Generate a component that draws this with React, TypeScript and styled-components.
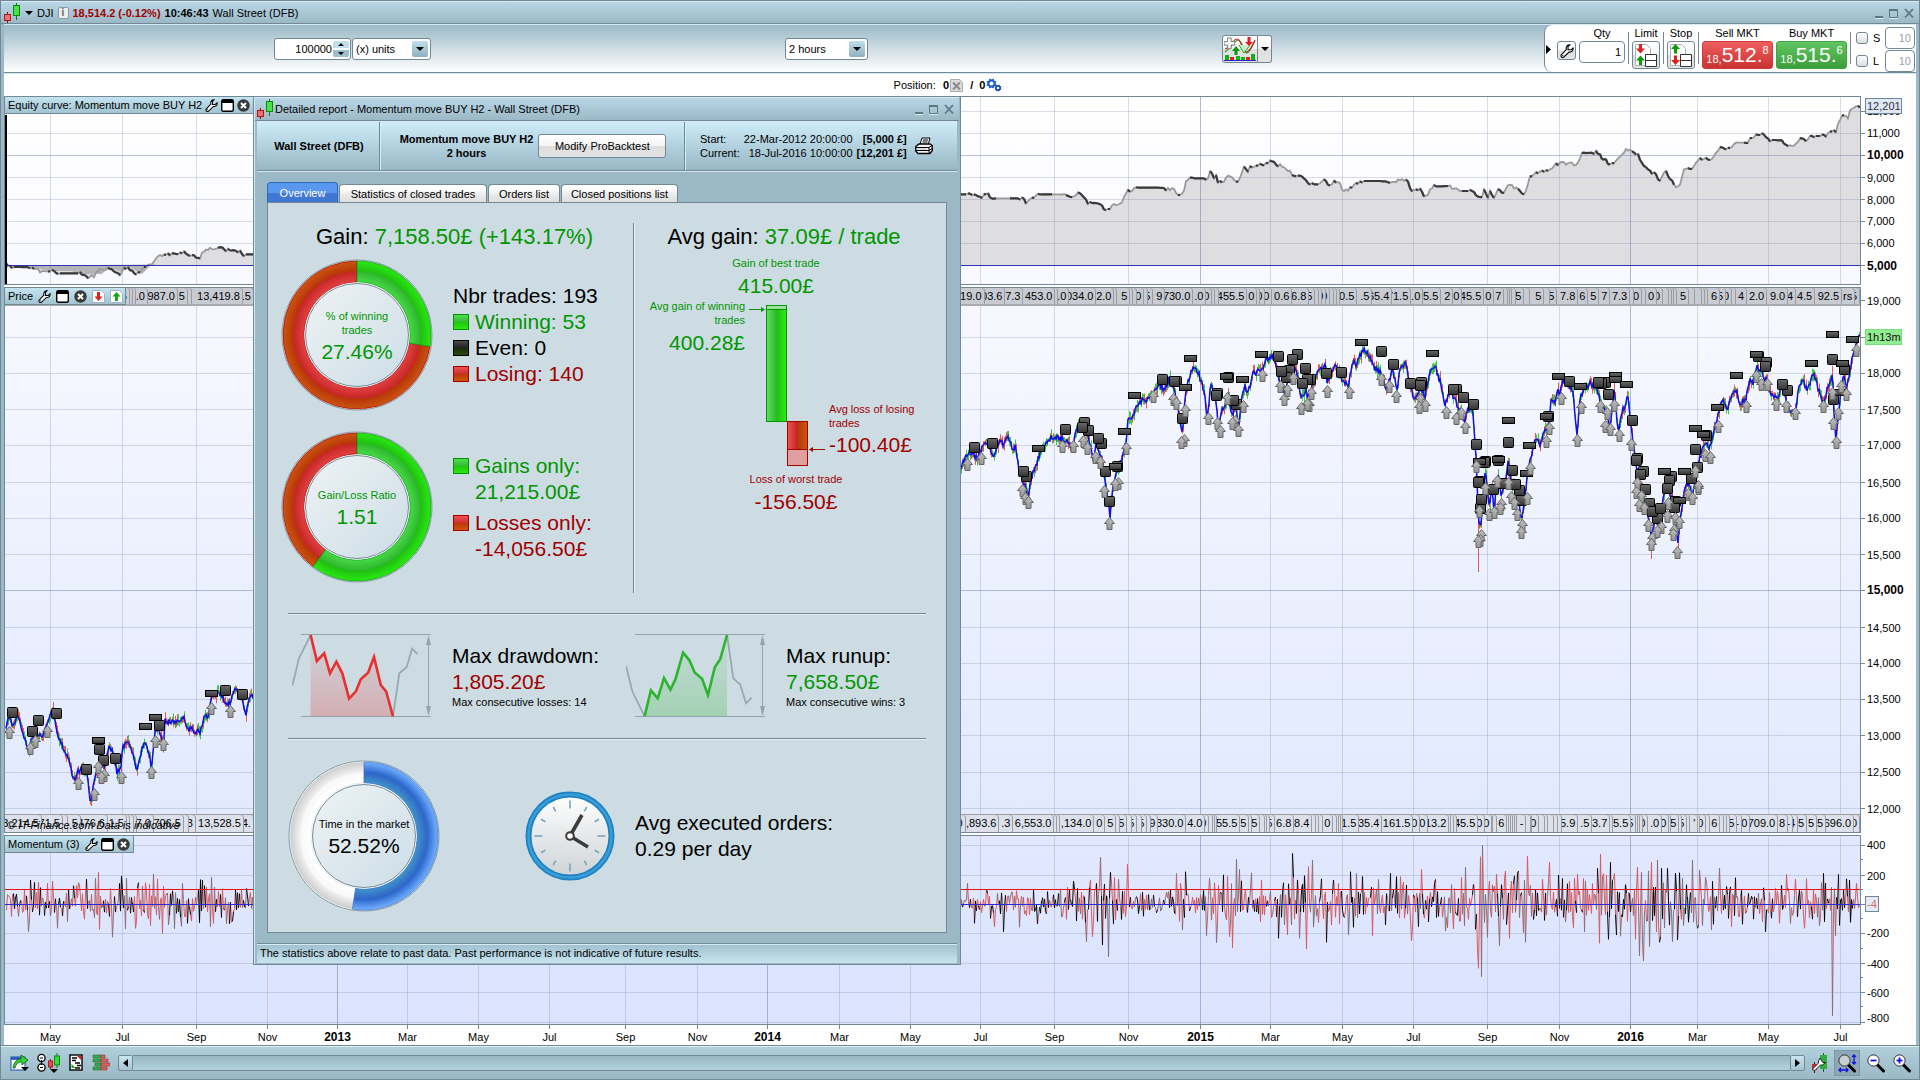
import React from 'react';
import styled, { createGlobalStyle, css } from 'styled-components';

type Pt = [number, number];

const INK = '#728894';
const STEEL = '#9ab8c6';
const GREEN = '#009600';
const RED = '#a00000';

const GlobalStyle = createGlobalStyle`
  *, *::before, *::after { box-sizing: border-box; }
  html, body, #root { height: 100%; }
  body { margin: 0; background: ${STEEL}; color: #000; font: 11px/14px "Liberation Sans", Arial, sans-serif; }
  button, input, select { font: inherit; color: inherit; margin: 0; }
  svg { display: block; flex: none; }
  h1, h2, p { margin: 0; font: inherit; }
`;

/* ---------- data ---------- */

const fromCrop = (pts: Pt[], x0: number, y0: number, sx = 3, sy = 3): Pt[] =>
  pts.map(([x, y]) => [x0 + x / sx, y0 + y / sy]);

const priceTrack: Pt[] = [
  ...fromCrop([[17,215],[28,165],[40,205],[52,165],[65,205],[85,275],[100,220],[112,215],[125,240],[140,190],[152,165],[160,155],[170,220],[180,245],[200,280],[210,310],[220,360],[235,335],[250,320],[262,355],[272,435],[285,350],[300,300],[312,320],[325,265],[335,270],[350,335],[362,325],[367,260],[383,240],[395,275],[410,330],[425,270],[437,240],[445,280],[455,320],[465,215],[475,200],[490,260],[495,185],[530,190],[550,165],[562,215],[575,195],[587,225],[595,205],[600,225],[612,165],[625,170],[635,105],[660,100],[675,130],[690,130],[705,90],[720,105],[738,160],[748,110],[765,105]], 0, 660),
  ...fromCrop([[-10,420],[10,400],[22,370],[35,365],[50,385],[65,360],[80,335],[100,375],[120,325],[128,345],[145,325],[158,355],[165,350],[172,390],[180,440],[195,460],[203,500],[215,440],[228,410],[240,365],[265,325],[310,325],[335,355],[345,310],[357,275],[370,290],[385,320],[400,390],[408,345],[420,375],[428,400],[435,450],[450,560],[458,470],[470,430],[485,385],[500,330],[503,265],[515,270],[528,225],[545,210],[555,215],[575,195],[585,170],[600,165],[610,180],[630,145],[645,185],[655,240],[667,320],[675,200],[690,130],[703,110],[715,125],[722,155],[732,180],[742,265],[752,160],[765,185],[775,290],[785,240],[795,230],[805,180],[815,260],[828,220],[835,290],[845,200],[855,165],[862,190],[880,130],[905,120],[918,85],[930,90],[938,75],[950,110],[962,170],[975,190],[985,150],[1000,110],[1010,120],[1023,210],[1035,180],[1045,200],[1060,160],[1075,125],[1095,110],[1102,160],[1115,120],[1130,105],[1145,150],[1165,170],[1178,95],[1190,110],[1200,75],[1212,60],[1230,80],[1240,110],[1262,125],[1280,180],[1297,115],[1310,180],[1320,120],[1335,95],[1345,140],[1360,205],[1380,180],[1395,200],[1410,120],[1425,105],[1438,150]], 960, 330),
  ...fromCrop([[0,150],[15,225],[30,180],[45,210],[60,240],[75,270],[85,235],[98,235],[108,380],[115,560],[122,600],[135,420],[148,530],[155,460],[162,540],[175,420],[182,500],[195,460],[205,390],[215,470],[230,460],[243,570],[255,500],[265,420],[275,370],[290,320],[300,350],[310,310],[325,290],[333,215],[345,215],[352,180],[360,190],[370,150],[385,160],[400,190],[410,320],[420,210],[430,180],[450,160],[470,170],[485,230],[500,240],[510,300],[522,180],[535,310],[548,230],[556,240],[562,190],[575,300],[585,380],[595,450],[605,480],[615,520],[625,570],[635,620],[645,570],[655,580],[665,540],[675,460],[685,480],[695,500],[705,560],[713,640],[725,540],[735,470],[745,460],[757,500],[770,420],[780,380],[795,340],[810,350],[825,290],[835,250],[845,210],[862,240],[875,190],[888,180],[900,220],[918,205],[930,150],[940,160],[950,105],[965,130],[980,150],[990,190],[1010,210],[1025,170],[1040,220],[1053,250],[1067,245],[1075,165],[1088,150],[1100,180],[1122,130],[1135,180],[1150,215],[1165,165],[1178,130],[1183,280],[1188,330],[1200,200],[1210,140],[1220,180],[1235,90],[1250,30],[1255,10],[1262,15]], 1440, 330),
];

const squares: Pt[] = [
  ...fromCrop([[37,157],[116,181],[97,214],[169,160],[259,328],[298,268],[311,302],[346,295],[478,196],[676,91],[727,103]], 0, 660),
  ...fromCrop([[43,352],[97,340],[200,440],[190,424],[316,298],[373,277],[386,302],[367,292],[425,341],[415,325],[436,424],[473,409],[448,514],[607,148],[650,154],[643,154],[667,265],[773,190],[769,195],[805,143],[830,223],[820,211],[955,79],[1012,73],[997,88],[988,121],[979,143],[964,124],[1036,115],[1051,148],[1042,148],[1027,160],[1099,130],[1144,127],[1264,64],[1300,103],[1351,160],[1385,158],[1381,165]], 960, 330),
  ...fromCrop([[50,178],[40,178],[70,202],[100,223],[109,343],[137,393],[133,398],[175,392],[205,337],[119,453],[115,458],[217,420],[188,460],[238,480],[227,464],[245,510],[160,478],[121,535],[124,508],[388,154],[325,260],[495,158],[484,159],[475,157],[505,193],[577,271],[592,384],[589,390],[610,424],[600,432],[616,477],[628,520],[652,566],[638,544],[662,535],[693,440],[687,450],[682,475],[705,515],[702,532],[754,445],[772,411],[766,358],[798,316],[955,78],[980,97],[976,109],[1042,181],[1027,163],[1177,88],[1213,118],[1180,208]], 1440, 330),
];
const bars: Pt[] = [
  ...fromCrop([[295,241],[466,172],[436,199],[634,100]], 0, 660),
  ...fromCrop([[235,355],[467,409],[493,304],[523,196],[691,85],[676,172],[800,139],[847,148],[904,73],[1204,37],[1417,70]], 960, 330),
  ...fromCrop([[205,271],[268,346],[355,139],[421,169],[526,136],[526,148],[559,163],[259,430],[119,394],[174,388],[320,259],[673,424],[733,424],[718,512],[832,232],[889,136],[949,73],[766,295],[790,313],[1114,100],[1177,13],[1237,28],[1207,100],[1195,187]], 1440, 330),
];
const arrows: Pt[] = [
  ...fromCrop([[28,218],[106,243],[91,265],[142,215],[235,370],[283,404],[295,322],[314,346],[305,353],[365,352],[454,337],[466,243],[490,253],[634,145],[691,154]], 0, 660),
  ...fromCrop([[22,403],[64,385],[187,482],[196,505],[206,517],[307,349],[340,349],[370,334],[382,355],[406,382],[421,397],[433,484],[449,580],[476,461],[467,463],[500,355],[581,200],[640,208],[650,220],[672,331],[664,337],[676,240],[745,266],[772,280],[781,304],[802,205],[826,274],[817,280],[835,301],[850,229],[907,136],[961,169],[973,208],[1000,145],[982,181],[1023,235],[1048,226],[1041,222],[1054,190],[1102,184],[1168,187],[1264,148],[1288,169],[1309,199],[1381,208],[1378,232],[1396,226]], 960, 330),
  ...fromCrop([[19,247],[50,265],[64,250],[76,292],[109,408],[136,475],[119,545],[124,615],[122,630],[115,634],[148,553],[163,548],[173,455],[183,523],[181,535],[205,460],[214,502],[223,520],[232,553],[247,585],[244,607],[262,505],[271,415],[328,295],[319,334],[364,205],[424,232],[412,331],[481,228],[502,250],[496,289],[511,298],[523,226],[538,316],[574,343],[592,460],[588,487],[604,500],[598,526],[613,535],[625,586],[637,625],[634,643],[663,592],[652,604],[682,558],[686,520],[705,565],[702,600],[699,613],[718,577],[713,667],[745,493],[757,505],[766,425],[776,475],[774,468],[796,376],[811,382],[835,289],[919,228],[949,139],[965,163],[982,163],[1009,223],[1040,229],[1067,250],[1150,228],[1177,190],[1180,280],[1195,250],[1188,337],[1204,170],[1219,193],[1248,61]], 1440, 330),
];

const equityTrack: Pt[] = [
  ...fromCrop([[12,790],[25,800],[75,802],[95,813],[130,815],[140,820],[200,820],[212,830],[228,830],[243,805],[256,812],[268,800],[285,822],[298,822],[305,800],[318,806],[332,825],[355,800],[375,797],[382,772],[400,768],[450,757],[460,770],[475,764],[487,775],[500,755],[522,745],[540,742],[560,752],[580,750],[595,763],[622,763]], 0, 0, 2.45),
  ...fromCrop([[780,583],[805,583],[812,578],[820,588],[835,590],[850,582],[863,595],[935,595],[947,608],[960,595],[980,583],[1035,583],[1045,590],[1065,590],[1073,577],[1100,610],[1118,608],[1150,635],[1160,612],[1175,615],[1195,575],[1212,563],[1270,563],[1305,570],[1330,587],[1337,550],[1348,535],[1392,535],[1398,515],[1405,535],[1410,515],[1415,550],[1430,545],[1440,525],[1467,545],[1480,505],[1490,510],[1500,497],[1520,497],[1548,483],[1566,497]], 640, 0, 2.45),
  ...fromCrop([[0,495],[20,515],[50,530],[75,553],[95,553],[110,540],[120,560],[130,545],[148,552],[152,568],[170,568],[185,550],[197,543],[245,543],[270,548],[300,537],[310,540],[320,568],[342,568],[352,587],[362,587],[370,560],[415,558],[435,573],[468,573],[492,598],[500,568],[510,595],[515,570],[525,595],[535,570],[545,578],[560,555],[575,562],[595,583],[603,570],[610,535],[622,518],[635,520],[655,510],[690,485],[725,497],[740,460],[775,457],[808,493],[830,475],[840,455],[862,447],[880,470],[898,505],[915,520],[930,540],[945,512],[970,560],[978,558],[990,510],[1005,510],[1030,475],[1055,480],[1080,440],[1095,450],[1115,428],[1145,428],[1163,405],[1187,405],[1192,420],[1225,420],[1240,435],[1260,437],[1280,413],[1290,425],[1302,408],[1335,408],[1355,385],[1362,393],[1375,345],[1393,350],[1400,325],[1422,320]], 1280, 0, 2.45),
];

const spikes: Pt[] = [
  ...fromCrop([[91,660],[142,670],[295,637],[284,655],[364,648],[460,642],[634,652],[235,668],[415,668],[606,660],[83,815],[170,805],[298,808],[337,832],[485,822],[404,805],[560,790]], 0, 660),
  ...fromCrop([[22,310],[340,303],[407,310],[421,232],[451,277],[463,293],[475,297],[500,253],[649,280],[661,310],[676,275],[748,295],[800,288],[827,238],[838,268],[904,300],[995,220],[1033,287],[1056,240],[1120,300],[1170,275],[1290,280],[1308,290],[1384,268],[42,430],[101,440],[128,455],[176,442],[230,432],[377,485],[395,470],[445,530],[425,495],[460,432],[647,475],[667,450],[739,468],[768,488],[815,503],[806,470],[955,475],[1018,475],[1039,507],[980,465],[1099,487],[1165,465],[1235,468],[1352,482],[1384,488]], 960, 780),
  ...fromCrop([[64,292],[76,262],[127,195],[119,230],[169,283],[196,273],[230,280],[260,229],[305,297],[328,247],[367,295],[412,283],[481,222],[499,285],[522,280],[590,262],[602,277],[634,247],[652,240],[682,265],[705,280],[757,240],[777,270],[836,265],[886,293],[1039,283],[1066,297],[1150,280],[1195,283],[1227,300],[1248,310],[40,447],[72,437],[110,508],[122,590],[115,565],[142,472],[176,497],[206,475],[230,490],[255,487],[410,457],[476,490],[505,478],[527,465],[596,527],[610,543],[628,500],[658,487],[697,485],[711,480],[770,445],[812,450],[905,433],[976,455],[1093,445],[1138,437],[1177,707],[1186,468]], 1440, 780),
];

const months: [number, string][] = [
  [50, 'May'], [122, 'Jul'], [196, 'Sep'], [267, 'Nov'], [337, '2013'], [407, 'Mar'], [478, 'May'], [549, 'Jul'],
  [625, 'Sep'], [697, 'Nov'], [767, '2014'], [839, 'Mar'], [910, 'May'], [980, 'Jul'], [1054, 'Sep'], [1128, 'Nov'],
  [1200, '2015'], [1270, 'Mar'], [1342, 'May'], [1413, 'Jul'], [1487, 'Sep'], [1559, 'Nov'], [1630, '2016'],
  [1697, 'Mar'], [1768, 'May'], [1840, 'Jul'],
];

const range = (n: number) => Array.from({ length: n }, (_, i) => i);
type Level = { y: number; label?: string; major?: boolean };
const equityLevels: Level[] = range(8).map((i) => ({
  y: 111.5 + i * 22, label: `${12 - i},000`, major: i === 2 || i === 7,
}));
const priceLevels: Level[] = range(15).map((i) => {
  const v = 19000 - i * 500;
  return { y: Math.floor(300.8 + i * 36.25) + 0.5, label: i === 1 ? undefined : `${Math.floor(v / 1000)},${v % 1000 ? '500' : '000'}`, major: v === 15000 };
});
const momentumLevels: Level[] = [400, 200, 0, -200, -400, -600, -800].map((v) => ({
  y: Math.round(904 - v * 0.147) + 0.5, label: v === 0 ? undefined : String(v),
}));

/* Tag strips: each entry is the right edge of a tag and the visible end of its text. */
type Tag = [number, string?];
const z2 = (x: number) => 640 + x / 2.45;
const z3 = (x: number) => 1280 + x / 2.45;
const a = (x: number) => 960 + x / 3;
const b = (x: number) => 1440 + x / 3;
const topTags: Tag[] = [
  [125], [130, '5'], [133], [136], [148, '.0'], [178, '987.0'], [188, '5'], [192], [243, '13,419.8'], [254, '.5'],
  [z2(780)], [z2(846), '919.0'], [z2(896), '03.6'], [z2(942), '7.3'], [z2(1018), '453.0'], [z2(1026)], [z2(1054), '.0'], [z2(1120), '034.0'], [z2(1164), '2.0'], [z2(1172)], [z2(1202), '5'], [z2(1210)], [z2(1219)], [z2(1238), '0'], [z2(1247)], [z2(1260), '5'], [z2(1288), '9'], [z2(1358), '730.0'], [z2(1388), '.0'], [z2(1403), '0'], [z2(1412)], [z2(1420)], [z2(1490), '455.5'], [z2(1513), '0'], [z2(1522)], [z2(1534), '0'], [z2(1552), '0'],
  [z3(31), '0.6'], [z3(74), '6.8'], [z3(88), '5'], [z3(97)], [z3(105)], [z3(114), '0'], [z3(126), '0'], [z3(134)], [z3(142)], [z3(150)], [z3(190), '0.5'], [z3(228), '.5'], [z3(276), '65.4'], [z3(324), '71.5'], [z3(354), '.0'], [z3(396), '5.5'], [z3(426), '2'], [z3(449), '0'], [z3(502), '45.5'], [z3(526), '0'], [z3(552), '7'], [z3(560)], [z3(566)], [z3(572)], [z3(580)], [z3(600), '5'], [z3(614)], [z3(650), '5'], [z3(664)], [z3(682), '5'], [z3(732), '7.8'], [z3(758), '6'], [z3(784), '5'], [z3(812), '7'], [z3(860), '7.3'], [z3(870)], [z3(890), '0'], [z3(898)], [z3(926), '0'], [z3(941), '0'], [z3(956)], [z3(962)], [z3(968)], [z3(974)], [z3(1004), '5'], [z3(1020)], [z3(1036)], [z3(1044)], [z3(1052)], [z3(1080), '6'], [z3(1096), '5'], [z3(1111), '0'], [z3(1120)], [z3(1146), '4'], [z3(1196), '2.0'], [z3(1246), '9.0'], [z3(1266), '4'], [z3(1312), '4.5'], [z3(1380), '92.5'], [z3(1410), 'rs'], [1861, '5'],
];
const bottomTags: Tag[] = [
  [42, '3,214.5'], [63, '71.5'], [68], [81, '5'], [108, '476.6'], [127, '1.5'], [130], [134], [137], [154, '7.0'], [184, '706.5'], [189], [196, '3'], [244, '13,528.5'], [254, '4.'],
  [958], [a(18), '0'], [a(121), ',893.6'], [a(163), '.3'], [a(285), '6,553.0'], [a(293)], [a(303)], [a(405), ',134.0'], [a(438), '0'], [a(470), '5'], [a(482)], [a(505), '5'], [a(520)], [a(535), '5'], [a(548)], [a(563), '5'], [a(575)], [a(598), '9'], [a(680), '330.0'], [a(738), '4.0'], [a(750), '0'], [a(763)], [a(769)], [a(775)], [a(843), '55.5'], [a(870), '5'], [a(880)], [a(903), '5'], [a(918)], [a(925)], [a(932)], [a(948), '5'], [a(1006), '6.8'], [a(1060), '8.4'], [a(1070)], [a(1080)], [a(1092)], [a(1123), '0'], [a(1135)], [a(1141)], [a(1147)], [a(1153)], [a(1201), '1.5'], [a(1268), '35.4'], [a(1363), '161.5'], [a(1383), '0'], [a(1408), '0'],
  [b(30), '13.2'], [b(37)], [b(45)], [b(53)], [b(118), '45.5'], [b(138), '0'], [b(158), '0'], [b(163)], [b(175)], [b(205), '6'], [b(211)], [b(217)], [b(223)], [b(229)], [b(235)], [b(260), '-'], [b(275)], [b(280)], [b(300), '0'], [b(318)], [b(326)], [b(345)], [b(358)], [b(370)], [b(416), '5.9'], [b(460), '.5'], [b(512), '3.7'], [b(522)], [b(576), '5.5'], [b(590), '5'], [b(597)], [b(603)], [b(611)], [b(628), '0'], [b(668), '.0'], [b(690), '0'], [b(697)], [b(720), '5'], [b(728)], [b(745), '5'], [b(752)], [b(776), "'"], [b(783)], [b(800), '0'], [b(812)], [b(843), '6'], [b(855)], [b(865)], [b(872)], [b(894), '5'], [b(908), '-'], [b(933), '0'], [b(1016), '709.0'], [b(1048), '8'], [b(1062), '-'], [b(1078), '4'], [b(1104), '5'], [b(1134), '5'], [b(1162), '5'], [b(1246), '696.0'], [1861, '0'],
];

/* ---------- generated chart geometry ---------- */

const makeRandom = (seed: number) => () => {
  seed = (seed * 1664525 + 1013904223) % 4294967296;
  return seed / 4294967296;
};
const lineAt = (track: Pt[], x: number) => {
  let i = 1;
  while (i < track.length - 1 && track[i][0] < x) i += 1;
  const [x0, y0] = track[i - 1];
  const [x1, y1] = track[i];
  return y0 + ((y1 - y0) * (x - x0)) / (x1 - x0 || 1);
};
const toPath = (pts: Pt[]) => pts.map(([x, y], i) => `${i ? 'L' : 'M'}${x.toFixed(1)} ${y.toFixed(1)}`).join('');

const buildPrice = () => {
  const rnd = makeRandom(7);
  const main: Pt[] = [];
  let up = '';
  let down = '';
  for (let x = 6; x < 1861; x += 1) {
    const y = lineAt(priceTrack, x) + (rnd() - 0.5) * 6;
    main.push([x, y]);
    const wick = `M${x + 0.5} ${(y - 1 - rnd() * 6).toFixed(1)}V${(y + 1 + rnd() * 6).toFixed(1)}`;
    if (rnd() > 0.5) up += wick;
    else down += wick;
  }
  return { main: toPath(main), up, down: `${down}M1478.5 520V572M1651.5 540V559M1832.5 366V380` };
};

const envelope: Pt[] = [[5, 14], [100, 16], [150, 18], [253, 14], [960, 10], [1060, 11], [1080, 19], [1110, 24], [1135, 12], [1165, 10], [1180, 22], [1198, 8], [1205, 27], [1250, 18], [1270, 10], [1290, 26], [1350, 18], [1400, 18], [1430, 18], [1470, 18], [1482, 38], [1500, 26], [1560, 18], [1600, 24], [1660, 30], [1700, 22], [1760, 16], [1800, 17], [1861, 20]];
const buildMomentum = () => {
  const rnd = makeRandom(23);
  const pts: Pt[] = [];
  let side = 1;
  for (let x = 6; x < 1860; x += 1) {
    const spike = spikes.find(([sx]) => Math.round(sx) === x);
    if (rnd() > 0.3) side = -side;
    const size = lineAt(envelope, x) * (1.5 * rnd() * rnd() + 0.4 * rnd());
    pts.push([x + 0.5, spike ? spike[1] : 903 + side * size]);
  }
  let dark = '';
  let grey = '';
  let light = '';
  pts.forEach((p, i) => {
    if (!i) return;
    const q = pts[i - 1];
    const seg = `M${q[0]} ${q[1].toFixed(1)}L${p[0]} ${p[1].toFixed(1)}`;
    const pick = rnd();
    const deep = Math.max(p[1], q[1]) > 925;
    if (pick < (deep ? 0.08 : 0.24)) dark += seg;
    else if (pick < 0.4) grey += seg;
    else light += seg;
  });
  return { dark, grey, light };
};

const buildEquity = () => {
  const rnd = makeRandom(5);
  const pts: Pt[] = [];
  for (let x = 6; x <= 1861; x += 2) {
    const y = lineAt(equityTrack, x);
    const flat = Math.abs(lineAt(equityTrack, x + 4) - lineAt(equityTrack, x - 4)) < 1;
    pts.push([x, flat ? y : y + (rnd() - 0.5) * 4]);
  }
  let dark = '';
  pts.forEach((p, i) => {
    if (!i) return;
    const q = pts[i - 1];
    if (p[1] - q[1] > -0.5 && Math.sin(p[0] / 9) > -0.75) dark += toPath([q, p]);
  });
  return { all: toPath(pts), dark, area: `${toPath(pts)}L1861 265.5L6 265.5Z` };
};

const price = buildPrice();
const momentum = buildMomentum();
const equity = buildEquity();

/* ---------- shared pieces ---------- */

const steelBar = css`background: linear-gradient(#bad8e7, ${STEEL});`;
const face = css`
  background: linear-gradient(#fff 0%, #f4f4f4 50%, #dedede 52%, #e4e4e4 100%);
  border: 1px solid ${INK};
  border-radius: 3px;
`;

const Window = styled.div`
  display: flex; flex-direction: column; height: 100%; min-height: 1040px; min-width: 1280px;
  border: 1px solid ${INK}; border-top: 0; background: ${STEEL}; padding: 0 3px; overflow: hidden;
`;
const TitleBar = styled.header`
  ${steelBar}
  flex: none; display: flex; align-items: center; gap: 4px; height: 24px; margin: 0 -3px; padding: 1px 5px 0 3px;
  border-top: 1px solid ${INK}; border-bottom: 1px solid ${INK}; box-shadow: inset 0 1px #d6eaf4;
`;
const Change = styled.strong`color: ${RED};`;
const Info = styled.span`
  display: grid; place-items: center; width: 11px; height: 12px; border: 1px solid #8a9aa4; border-radius: 2px;
  background: #eee; color: #666; font-weight: bold; font-size: 10px; line-height: 10px;
`;
const Sash = styled.div`margin-left: auto; display: flex; gap: 5px;`;
const SashButton = styled.button`border: 0; padding: 0; background: none; color: #5d7684;`;

const Toolbar = styled.div`
  flex: none; display: flex; align-items: center; height: 49px; border-top: 1px solid #d5ecf6; border-bottom: 1px solid ${INK};
  background: linear-gradient(#9bb9c7, #fff);
`;
const Gap = styled.div<{ $grow: number }>`flex: ${(p) => p.$grow} 1 0;`;
const Field = styled.label<{ $width: number }>`
  position: relative; display: flex; align-items: center; width: ${(p) => p.$width}px; height: 22px; margin-right: 1px;
  background: #fff; border: 1px solid ${INK}; border-radius: 3px;
`;
const NumberBox = styled.input`width: 100%; height: 18px; border: 0; padding: 0 18px 0 4px; text-align: right; background: none;`;
const Choice = styled.select`
  appearance: none; width: 100%; height: 18px; border: 0; padding: 0 20px 0 3px; background: none;
`;
const Drop = styled.span`
  position: absolute; right: 2px; top: 2px; width: 16px; height: 16px; display: grid; place-items: center; pointer-events: none;
  border-radius: 2px; background: linear-gradient(#bfdfec, #8fb0be);
`;
const Steps = styled(Drop)`right: 1px; background: linear-gradient(#bfdfec 0 7px, #fff 7px 9px, #9dbfcd 9px);`;
const Split = styled.div`display: flex; height: 28px;`;
const SplitButton = styled.button<{ $width: number; $side: 'left' | 'right' }>`
  ${face}
  display: grid; place-items: center; padding: 0; width: ${(p) => p.$width}px;
  ${(p) => (p.$side === 'left' ? 'border-radius: 3px 0 0 3px;' : 'border-radius: 0 3px 3px 0; border-left: 0;')}
`;

const OrderPanel = styled.div`
  flex: none; display: flex; align-items: flex-start; height: 47px; padding: 1px 1px 0 1px; background: #fff;
  border-left: 1px solid ${INK}; border-radius: 8px 0 0 8px;
`;
const Handle = styled.button`align-self: center; border: 0; background: none; padding: 0; width: 9px;`;
const Column = styled.div<{ $left?: number; $right?: number }>`
  display: flex; flex-direction: column; align-items: center;
  margin: 0 ${(p) => p.$right ?? 3}px 0 ${(p) => p.$left ?? 3}px;
`;
const Caption = styled.label`line-height: 15px; white-space: nowrap;`;
const Qty = styled.input<{ $width: number }>`
  width: ${(p) => p.$width}px; height: 22px; border: 1px solid ${INK}; border-radius: 4px; text-align: right; padding: 0 3px;
  background: #fff;
  &:disabled { color: #9aa4ab; }
`;
const Rule = styled.span`width: 1px; height: 32px; margin-top: 6px; background: ${INK};`;
const Tool = styled.button<{ $w: number; $h: number }>`
  ${face}
  display: grid; place-items: center; padding: 0; width: ${(p) => p.$w}px; height: ${(p) => p.$h}px;
`;
const Deal = styled.button<{ $tone: 'sell' | 'buy' }>`
  display: flex; align-items: flex-end; justify-content: center; width: 71px; height: 28px; padding: 0 0 2px; color: #fff; border-radius: 3px;
  ${(p) => (p.$tone === 'sell'
    ? 'background: linear-gradient(#ef5f5f, #c93232); border: 1px solid #cf3a3a;'
    : 'background: linear-gradient(#62c462, #3a9f3a); border: 1px solid #3fa53f;')}
  big { font-size: 21px; line-height: 23px; }
  sup { font-size: 11px; line-height: 12px; align-self: flex-start; margin-top: 2px; }
  small { font-size: 11px; line-height: 14px; }
`;
const Guards = styled.div`display: flex; flex-direction: column; margin-left: 5px;`;
const Guard = styled.label`
  display: flex; align-items: center; gap: 5px; height: 23px;
  span { width: 7px; }
`;
const Tick = styled.input`
  appearance: none; width: 12px; height: 12px; border: 1px solid ${INK}; border-radius: 3px; background: linear-gradient(#fff, #ddd);
`;

const PositionBar = styled.div`
  flex: none; display: flex; align-items: center; justify-content: center; gap: 1px; height: 23px; padding-right: 24px; background: #fff;
  border-top: 1px solid #d5ecf6; white-space: pre;
`;

const Charts = styled.main`position: relative; flex: 1; min-height: 0; display: flex; flex-direction: column; gap: 2px; background: #fff;`;
const Pane = styled.section<{ $grow: number }>`position: relative; flex: ${(p) => p.$grow} 1 0; min-height: 0; display: flex;`;
const Plot = styled.div<{ $from: string; $to: string }>`
  position: relative; flex: 1; min-width: 0; overflow: hidden; border: 1px solid ${INK};
  background: linear-gradient(${(p) => p.$from}, ${(p) => p.$to});
`;
const PlotSvg = styled.svg`position: absolute; inset: 0; width: 100%; height: 100%;`;
const AxisSvg = styled.svg`
  width: 55px; height: 100%; overflow: visible;
  text { font-size: 11px; dominant-baseline: central; }
  text.major { font-size: 12px; font-weight: bold; }
`;
const TimeAxis = styled.div`flex: none; height: 20px; margin-top: -2px; padding-right: 55px; background: #fff;`;
const TimeSvg = styled.svg`
  width: 100%; height: 20px; overflow: visible;
  text { font-size: 11px; text-anchor: middle; }
  text.major { font-size: 12px; font-weight: bold; }
`;
const PaneTitle = styled.div<{ $width: number; $gap?: number }>`
  position: absolute; left: 0; top: 0; z-index: 1; display: flex; align-items: center; gap: ${(p) => p.$gap ?? 3}px; width: ${(p) => p.$width}px; height: 18px;
  padding: 0 3px; white-space: nowrap; border: 1px solid ${INK}; background: linear-gradient(#c3e4f0, #a3c3d1);
  h2 { margin-right: auto; }
`;
const IconButton = styled.button`border: 0; padding: 0; background: none; display: block;`;
const Strip = styled.div<{ $place: 'top' | 'bottom' }>`
  position: absolute; left: 0; right: 0; height: 18px; display: flex; overflow: hidden;
  ${(p) => (p.$place === 'top' ? 'top: 0; background: #c9cbd3; border-bottom: 2px solid #a9abb1;' : 'bottom: 0; background: #dce0ea; border-top: 1px solid #9b9da3;')}
`;
const TagCell = styled.span<{ $grow: number }>`
  flex: ${(p) => p.$grow} 1 0; min-width: 0; display: flex; justify-content: flex-end; overflow: hidden; line-height: 17px;
  box-shadow: inset -1px 0 #9d9da1; border-top-right-radius: 3px;
  span { flex: none; margin-right: 3px; }
`;
const Copyright = styled.p`position: absolute; left: 2px; bottom: 0; font-style: italic; white-space: nowrap;`;

const StatusBar = styled.footer`
  flex: none; display: flex; align-items: center; height: 34px; margin: 0 -3px; padding: 0 7px 0 9px; border-top: 1px solid ${INK};
  box-shadow: inset 0 1px #e2f2f8; background: linear-gradient(#b1d0dc, ${STEEL});
`;
const Icons = styled.div<{ $gap: number; $before?: number }>`
  display: flex; align-items: center; gap: ${(p) => p.$gap}px; margin-left: ${(p) => p.$before || 0}px;
`;
const ScrollButton = styled.button`
  display: grid; place-items: center; width: 15px; height: 16px; padding: 0; border: 1px solid ${INK}; border-radius: 2px;
  background: linear-gradient(#c8e4ef, #a5c5d3);
`;
const Track = styled.div`flex: 1; height: 16px; border: 1px solid ${INK}; border-width: 1px 0; background: linear-gradient(#98b6c4, #b0d2df);`;
const Pressed = styled.button`
  display: grid; place-items: center; width: 26px; height: 26px; padding: 0; border: 1px solid #7d97a5; background: #8ea7b6;
`;

/* ---------- report window ---------- */

const Report = styled.article`
  position: absolute; left: 249px; top: 0; z-index: 3; width: 708px; border: 1px solid ${INK}; background: ${STEEL}; padding: 0 3px 1px;
  box-shadow: inset 1px 0 #d5ecf6;
`;
const ReportTitle = styled.div`
  ${steelBar}
  display: flex; align-items: center; gap: 1px; height: 24px; margin: 0 -2px; padding: 0 5px 0 2px; border-bottom: 1px solid ${INK};
  box-shadow: inset 0 1px #d6eaf4;
`;
const ReportHead = styled.div`
  display: grid; grid-template-columns: 122px 305px 1fr; height: 50px; border-top: 1px solid #d5ecf6; border-bottom: 1px solid ${INK};
  background: linear-gradient(#cdebf8, #98b7c5); box-shadow: 0 1px #d5ecf6;
`;
const HeadCell = styled.div`
  display: flex; align-items: center; gap: 5px; padding: 0 10px 0 12px; justify-content: center;
  & + & { border-left: 1px solid ${INK}; box-shadow: inset 1px 0 #d5ecf6; }
  & + & + & { justify-content: flex-start; gap: 8px; padding: 0 15px; }
`;
const Bold = styled.strong`text-align: center; white-space: nowrap;`;
const Modify = styled.button`${face} width: 128px; height: 24px; white-space: nowrap; padding: 0;`;
const Dates = styled.dl`
  display: grid; grid-template-columns: auto auto auto; column-gap: 4px; margin: 0; white-space: nowrap;
  dt, dd { margin: 0; }
  dd { text-align: right; }
  dd.amount { font-weight: bold; }
`;
const Tabs = styled.div`display: flex; align-items: flex-end; gap: 1px; margin: 11px 10px 0; height: 20px;`;
const Tab = styled.button<{ $width: number; $active?: boolean }>`
  width: ${(p) => p.$width}px; padding: 0; white-space: nowrap; border: 1px solid ${INK}; border-radius: 4px 4px 0 0; border-bottom: 0;
  ${(p) => (p.$active
    ? 'height: 20px; color: #fff; border-color: #2f66b8; background: linear-gradient(#5a97ee 50%, #3f77d2 52%);'
    : 'height: 18px; background: linear-gradient(#fff 20%, #e9e9e9 60%, #dedede);')}
`;
const Sheet = styled.div`margin: 0 10px; padding: 20px 20px 0; border: 1px solid ${INK}; background: #cddce3;`;
const Upper = styled.div`display: grid; grid-template-columns: 345px 1fr; margin: 0 -20px 20px 0; min-height: 370px;`;
const Heading = styled.h2<{ $inset: number }>`
  font-size: 22px; line-height: 27px; text-align: center; white-space: nowrap; padding-right: ${(p) => p.$inset}px;
`;
const GainSide = styled.div`
  display: flex; flex-direction: column; gap: 20px; margin-left: -7px;
  > h2 { margin: 0 0 -11px; }
`;
const Row = styled.div<{ $gap: number }>`display: flex; align-items: center; gap: ${(p) => p.$gap}px;`;
const Big = styled.p<{ $tone?: string }>`font-size: 21px; line-height: 26px; color: ${(p) => p.$tone || '#000'}; white-space: nowrap;`;
const Small = styled.p<{ $tone?: string }>`color: ${(p) => p.$tone || '#000'};`;
const Tone = styled.span<{ $tone: string }>`color: ${(p) => p.$tone};`;
const Legend = styled.div`display: flex; flex-direction: column;`;
const Entry = styled.div<{ $space?: number }>`display: flex; gap: 6px; margin-top: ${(p) => p.$space || 0}px;`;
const Swatch = styled.i<{ $edge: string; $fill: string }>`
  flex: none; width: 16px; height: 16px; margin-top: 5px; border: 1px solid ${(p) => p.$edge}; background: linear-gradient(${(p) => p.$fill});
`;
const DonutBox = styled.div`display: grid; place-items: center; > * { grid-area: 1 / 1; }`;
const DonutText = styled.div<{ $tone: string }>`
  color: ${(p) => p.$tone}; text-align: center; padding-top: 6px; white-space: pre-line;
  strong { display: block; font-weight: normal; font-size: 21px; line-height: 30px; }
`;
const TradeSide = styled.div`border-left: 1px solid ${INK}; box-shadow: inset 1px 0 #e6f1f6;`;
const Best = styled.div`width: 284px; margin-top: 6px; text-align: center; p + p { margin-top: 3px; }`;
const Worst = styled(Best)`width: 300px; margin: 0 0 0 12px;`;
const TradeBars = styled.div`display: grid; grid-template-columns: 111px 84px 1fr;`;
const WinLabel = styled.div`text-align: right; p:first-child { padding-left: 4px; } p:last-child { margin-top: 3px; }`;
const LossLabel = styled.div`align-self: end; padding-bottom: 14px; p:last-child { margin-top: 2px; } p:first-child { width: 96px; }`;
const Band = styled.section<{ $height: number }>`
  display: flex; align-items: center; min-height: ${(p) => p.$height}px; border-top: 1px solid ${INK}; box-shadow: inset 0 1px #e6f1f6;
`;
const Extreme = styled.div`flex: none; display: flex; align-items: center; gap: 20px; width: 334px; padding-left: 4px;`;
const Extremes = styled.div`display: flex; margin-right: -40px;`;
const ReportFoot = styled.div`
  height: 20px; margin-top: 10px; padding-left: 3px; line-height: 19px; border-top: 1px solid ${INK};
  background: linear-gradient(#a0c0ce, #c6e4f0); box-shadow: inset 0 1px #d5ecf6;
`;

/* ---------- icons ---------- */

const Candles = () => (
  <svg width="17" height="20" viewBox="0 0 17 20" aria-hidden="true">
    <path d="M3.500 9v11" stroke="#8c1010" /><path d="M12.500 0v17" stroke="#0a7a0a" />
    <rect x=".5" y="11.500" width="6" height="6" fill="#f07070" stroke="#b01818" />
    <rect x="9.500" y="2.500" width="6" height="10" fill="#4be04b" stroke="#0a8a0a" />
  </svg>
);
const Caret = ({ size = 8 }: { size?: number }) => (
  <svg width={size} height={size / 2} viewBox="0 0 8 4" aria-hidden="true"><path d="M0 0h8L4 4z" /></svg>
);
const Minimise = () => <svg width="10" height="12" viewBox="0 0 10 12"><path d="M1 10h8" stroke="currentColor" strokeWidth="2" /><path d="M1 11.500h8" stroke="#d5ecf6" /></svg>;
const Maximise = () => <svg width="10" height="12" viewBox="0 0 10 12"><path d="M.500 3v7.500h8V3" fill="none" stroke="currentColor" /><path d="M0 3h9" stroke="currentColor" strokeWidth="2" /><path d="M0 11.500h9" stroke="#d5ecf6" /></svg>;
const Close = () => <svg width="10" height="12" viewBox="0 0 10 12"><path d="M1 2l8 8.500M9 2L1 10.500" stroke="currentColor" strokeWidth="1.800" /></svg>;
const SashButtons = () => (
  <Sash>
    <SashButton aria-label="Minimise"><Minimise /></SashButton>
    <SashButton aria-label="Maximise"><Maximise /></SashButton>
    <SashButton aria-label="Close"><Close /></SashButton>
  </Sash>
);
const Wrench = ({ size = 13 }: { size?: number }) => (
  <svg width={size} height={size} viewBox="0 0 14 14" aria-hidden="true">
    <path d="M9.800.8 8 2.600v3.200h3.200L13 4c.6 2.400-1.300 4.500-4 4L3.600 13.200c-1.500 1-3.300-.8-2.300-2.300L6.300 5.600C5.700 2.800 7.500.4 9.800.8z" fill="#fff" stroke="#000" strokeWidth="1.100" />
    <circle cx="2.800" cy="11.600" r=".6" />
  </svg>
);
const Frame = () => (
  <svg width="13" height="13" viewBox="0 0 13 13" aria-hidden="true">
    <rect x=".7" y=".7" width="11.600" height="11.600" rx="1.500" fill="#fff" stroke="#000" strokeWidth="1.400" /><path d="M1 2.500h11" stroke="#000" strokeWidth="3" />
  </svg>
);
const CloseRound = () => (
  <svg width="13" height="13" viewBox="0 0 13 13" aria-hidden="true">
    <circle cx="6.500" cy="6.500" r="6.200" fill="#3a3a3a" /><path d="M4 4l5 5M9 4L4 9" stroke="#fff" strokeWidth="2" />
  </svg>
);
const ArrowNote = ({ up }: { up?: boolean }) => (
  <svg width="13" height="13" viewBox="0 0 13 13" aria-hidden="true">
    <path d="M.500.500h9l3 3v9H.500z" fill="#fff" stroke="#9fb4c0" />
    <path d={up ? 'M6.500 2L2.500 6.500H5V11h3V6.500h2.500z' : 'M6.500 11L2.500 6.500H5V2h3v4.500h2.500z'} fill={up ? '#10a810' : '#e02020'} />
  </svg>
);
const OrderIcon = ({ stop }: { stop?: boolean }) => (
  <svg width="24" height="24" viewBox="0 0 24 24" aria-hidden="true">
    <path d="M1.500 1.500h11l4 4v17h-15z" fill="#fff" stroke="#a9b3b8" />
    <path d={stop ? 'M6.500 1L2 6H5v4.500h3V6h3z' : 'M6.500 10.500L2 5.500H5V1h3v4.500h3z'} fill={stop ? '#0a9a0a' : '#e02020'} />
    <path d={stop ? 'M6.500 22L2 17H5v-4.500h3V17h3z' : 'M6.500 12.500L2 17.500H5V22h3v-4.500h3z'} fill={stop ? '#e02020' : '#0a9a0a'} />
    <path d="M11.500 11.500h11v12h-11zM11.500 17.500h11" fill="#fff" stroke="#333" />
  </svg>
);
const Indicators = () => (
  <svg width="32" height="24" viewBox="0 0 32 24" aria-hidden="true">
    <path d="M1 15C6 12 10 4 14 3s6 14 9 13 5-6 8-12" fill="none" stroke="#2a2" strokeWidth="1.200" />
    <path d="M1 12C6 11 9 2 13 2s6 13 9 13 5-4 9-12" fill="none" stroke="#c22" strokeWidth="1.200" />
    <path d="M15 8l5 8 6-8" fill="#cdeccd" stroke="#2a2" />
    <path d="M12 9l-4 5h2.500v4h3v-4H16z" fill="#0a9a0a" /><path d="M25 9l-4-4h2.500V0h3v5H29z" fill="#e02020" />
    <path d="M4 1h4v4h4v4H8v4H4V9H0V5h4z" fill="#f4f4f4" stroke="#777" transform="scale(.9)" />
    <path d="M1 18h4v5H1zM12 19h4v4h-4zM17 20h4v3h-4zM27 17h4v6h-4z" fill="#12b012" />
    <path d="M6 20h4v3H6zM22 20h4v3h-4z" fill="#d22" /><path d="M0 23.500h32" stroke="#22c" />
  </svg>
);
const gearPath = (cx: number, cy: number, r: number) =>
  range(16).map((i) => {
    const t = (i * Math.PI) / 8;
    const k = i % 2 ? r : r * 0.72;
    return `${i ? 'L' : 'M'}${(cx + k * Math.cos(t)).toFixed(1)} ${(cy + k * Math.sin(t)).toFixed(1)}`;
  }).join('') + 'Z';
const Gears = () => (
  <svg width="16" height="14" viewBox="0 0 16 14" aria-hidden="true">
    <path d={gearPath(5.500, 5.500, 5.500)} fill="#1d5fd0" /><circle cx="5.500" cy="5.500" r="2" fill="#fff" />
    <path d={gearPath(12, 10, 3.800)} fill="#1248b0" /><circle cx="12" cy="10" r="1.300" fill="#fff" />
  </svg>
);
const CancelNote = () => (
  <svg width="13" height="13" viewBox="0 0 13 13" aria-hidden="true">
    <path d="M.500.500h9l3 3v9H.500z" fill="#ddd" stroke="#aaa" /><path d="M3 3.500l7 7M10 3.500l-7 7" stroke="#8c8c8c" strokeWidth="2.200" />
  </svg>
);
const Printer = () => (
  <svg width="18" height="18" viewBox="0 0 18 18" aria-hidden="true">
    <path d="M5 7l2-6h8l-2 7z" fill="#fff" stroke="#000" /><path d="M8 3h5M7.500 5h5" stroke="#000" />
    <path d="M.700 9.500L4 7h11l2.300 1.500v5L15 16.500H3L.700 14z" fill="#f2f2f2" stroke="#000" strokeWidth="1.300" />
    <path d="M1 10.500h13l3-2M1 13.500h13l3-2M14 10.500V16" stroke="#000" fill="none" />
    <path d="M2 12h9" stroke="#bbb" />
  </svg>
);
const ExportChart = () => (
  <svg width="19" height="18" viewBox="0 0 19 18" aria-hidden="true">
    <rect x="1" y="3" width="14" height="13" fill="#fff" stroke="#1c4fae" /><path d="M1 4.500h14" stroke="#1c4fae" strokeWidth="2.500" />
    <path d="M3 14C4 8 7 5 11 5V1l7 5-6 5V8C8 8 6 10 5 14z" fill="#3fce3f" stroke="#0a7a0a" /><path d="M11 13h8l-4 4z" />
  </svg>
);
const LinkCandles = () => (
  <svg width="24" height="20" viewBox="0 0 24 20" aria-hidden="true">
    <circle cx="4.500" cy="5" r="3.600" fill="#fff" stroke="#000" strokeWidth="1.300" /><circle cx="4.500" cy="14.500" r="3.600" fill="#fff" stroke="#000" strokeWidth="1.300" />
    <path d="M3 5h3M3 14.500h3M4.500 7v5" stroke="#000" /><path d="M13.500 6v10" stroke="#8c1010" /><path d="M20 0v15" stroke="#0a7a0a" />
    <rect x="11.500" y="8" width="4" height="6" fill="#e85050" stroke="#b01818" /><rect x="17.500" y="3" width="5" height="9" fill="#3ed63e" stroke="#0a8a0a" /><path d="M13 16h8l-4 4z" />
  </svg>
);
const News = () => (
  <svg width="15" height="17" viewBox="0 0 15 17" aria-hidden="true">
    <rect x="1" y="1" width="12" height="15" fill="#fff" stroke="#000" strokeWidth="1.400" /><path d="M3 4h5M3 6.500h4M6 9h5M8 11.500h4M6 14h5" stroke="#000" strokeWidth="1.300" />
    <path d="M8 2h4v4z" fill="#e02020" /><path d="M2.500 10v4h4z" fill="#10a810" />
  </svg>
);
const Book = () => (
  <svg width="18" height="18" viewBox="0 0 18 18" aria-hidden="true">
    <path d="M1 1h8v3H1zM1 5h8v3H1zM3 9h6v3H3zM1 13h8v3H1z" fill="#2cae4c" stroke="#3a6a3a" strokeWidth=".6" />
    <path d="M9 1h4v3H9zM9 5h7v3H9zM9 9h9v3H9zM9 13h6v3H9z" fill="#e06060" stroke="#8a3030" strokeWidth=".6" />
  </svg>
);
const SettingsCandles = () => (
  <svg width="17" height="20" viewBox="0 0 17 20" aria-hidden="true">
    <path d="M3.500 9v11" stroke="#5a1010" /><path d="M12.500 0v19" stroke="#063" />
    <rect x="1" y="11" width="5" height="6" fill="#c03030" /><rect x="9" y="2" width="7" height="14" fill="#2fae3f" />
    <path d="M9 5L7.500 8v2L2 15.500c-.5 1.500.8 2.500 2 1.800L9.500 12h2l3-2.500-2.500.2-1.500-2z" fill="#fff" stroke="#000" strokeWidth=".8" />
  </svg>
);
const Lens = ({ sign }: { sign: 'plus' | 'minus' | 'fit' }) => (
  <svg width="20" height="20" viewBox="0 0 20 20" aria-hidden="true">
    <path d="M11.500 12l6 6" stroke="#000" strokeWidth="3" strokeLinecap="round" />
    <circle cx="7.500" cy="7.500" r="5.600" fill={sign === 'fit' ? '#c9cfd3' : '#fff'} stroke="#333" />
    {sign !== 'fit' && <path d="M4.500 7.500h6" stroke="#1010e0" strokeWidth="1.800" />}
    {sign === 'plus' && <path d="M7.500 4.500v6" stroke="#1010e0" strokeWidth="1.800" />}
    {sign === 'fit' && <path d="M17 2v9M15 4l2-2 2 2M15 9l2 2 2-2M2 17h9M4 15l-2 2 2 2M9 15l2 2-2 2" fill="none" stroke="#1010e0" strokeWidth="1.300" />}
  </svg>
);

/* ---------- charts ---------- */

const GridLines = ({ levels, top, bottom }: { levels: Level[]; top: number; bottom: number }) => (
  <g stroke="#7884aa">
    {levels.map((l) => <path key={l.y} d={`M5 ${l.y}H1861`} opacity={l.major ? 0.5 : 0.27} />)}
    {months.map(([x, m]) => <path key={x} d={`M${x + 0.5} ${top}V${bottom}`} opacity={/\d/.test(m) ? 0.55 : 0.27} />)}
  </g>
);

type AxisProps = { levels: Level[]; top: number; bottom: number; ticks?: number[]; badge: { y: number; text: string; tone: 'blue' | 'green' | 'red' } };
const tones = { blue: ['#dfe6f8', INK, '#333'], green: ['#90ee90', '#7bdc7b', '#111'], red: ['#e4eaf8', INK, '#e06a5a'] };
const Axis = ({ levels, top, bottom, ticks = [], badge }: AxisProps) => {
  const pct = (y: number) => `${(((y - top) / (bottom - top)) * 100).toFixed(3)}%`;
  const [fill, edge, ink] = tones[badge.tone];
  return (
    <AxisSvg>
      {levels.map((l) => (
        <g key={l.y}>
          <line x1="0" x2="4" y1={pct(l.y)} y2={pct(l.y)} stroke={INK} />
          {l.label && <text x="6" y={pct(Math.min(l.y, bottom - 7))} className={l.major ? 'major' : undefined}>{l.label}</text>}
        </g>
      ))}
      {ticks.map((y) => <line key={y} x1="0" x2="2" y1={pct(y)} y2={pct(y)} stroke={INK} />)}
      <rect x="4.500" y={pct(badge.y - 7.500)} width={badge.tone === 'red' ? 13 : 36} height="15" fill={fill} stroke={edge} />
      <text x="6" y={pct(badge.y)} fill={ink}>{badge.text}</text>
    </AxisSvg>
  );
};

const TagStrip = ({ tags, place }: { tags: Tag[]; place: 'top' | 'bottom' }) => (
  <Strip $place={place}>
    {tags.map(([end, text], i) => (
      <TagCell key={i} $grow={Math.round(end) - (i ? Math.round(tags[i - 1][0]) : 5)}>{text && <span>{text}</span>}</TagCell>
    ))}
  </Strip>
);

const TitleIcons = () => (
  <>
    <IconButton aria-label="Settings"><Wrench /></IconButton>
    <IconButton aria-label="Restore"><Frame /></IconButton>
    <IconButton aria-label="Close"><CloseRound /></IconButton>
  </>
);

const EquityPane = () => (
  <Pane $grow={189}>
    <PaneTitle $width={250}><h2>Equity curve: Momentum move BUY H2</h2><TitleIcons /></PaneTitle>
    <Plot $from="#ffffff" $to="#f8f9ff">
      <PlotSvg viewBox="5 97 1855 187" preserveAspectRatio="none">
        <path d={equity.area} fill="#dedee1" />
        <path d="M30 265.500V267l20 4h22l4 3h26l6-7 14 5 6-6 14 8 9-9h5v-.5z" fill="#b4b4b8" />
        <GridLines levels={equityLevels} top={97} bottom={285} />
        <path d={equity.all} fill="none" stroke="#9a9a9a" strokeWidth="1.800" />
        <path d={equity.dark} fill="none" stroke="#3a3a3a" strokeWidth="2.200" />
        <path d="M5 265.500H1861" stroke="#3030b8" />
        <path d="M6 115V285" stroke="#000" strokeWidth="2" />
      </PlotSvg>
    </Plot>
    <Axis levels={equityLevels} top={96} bottom={285} badge={{ y: 106, text: '12,201', tone: 'blue' }} />
  </Pane>
);

const snap = (v: number) => Math.round(v - 0.5) + 0.5;
const PricePane = () => (
  <Pane $grow={546}>
    <PaneTitle $width={122} $gap={5}>
      <h2>Price</h2><TitleIcons />
      <IconButton aria-label="Show sells"><ArrowNote /></IconButton>
      <IconButton aria-label="Show buys"><ArrowNote up /></IconButton>
    </PaneTitle>
    <Plot $from="#f8f9ff" $to="#e1e9fe">
      <PlotSvg viewBox="5 288 1855 544" preserveAspectRatio="none">
        <defs>
          <linearGradient id="block" x2="0" y2="1"><stop stopColor="#6a6a6a" /><stop offset="1" stopColor="#343434" /></linearGradient>
          <linearGradient id="arrow" x2="0" y2="1"><stop stopColor="#c0c0c0" /><stop offset="1" stopColor="#949494" /></linearGradient>
        </defs>
        <GridLines levels={priceLevels} top={288} bottom={832} />
        <path d={price.up} stroke="#3fc84a" fill="none" />
        <path d={price.down} stroke="#e05a5a" fill="none" />
        <path d={price.main} stroke="#1010e6" strokeWidth="1.500" fill="none" />
        {squares.map(([x, y], i) => <rect key={i} x={snap(x) - 5} y={snap(y) - 5} width="10" height="10" rx="1" fill="url(#block)" stroke="#000" />)}
        {bars.map(([x, y], i) => <rect key={i} x={snap(x) - 6} y={snap(y) - 3} width="12" height="6" fill="url(#block)" stroke="#000" />)}
        {arrows.map(([x, y], i) => (
          <path key={i} d={`M${snap(x)} ${snap(y) - 6}l5 6h-2.500v6h-5v-6h-2.500z`} fill="url(#arrow)" stroke="#686868" />
        ))}
      </PlotSvg>
      <TagStrip tags={topTags} place="top" />
      <TagStrip tags={bottomTags} place="bottom" />
      <Copyright>© IT-Finance.com Data is indicative</Copyright>
    </Plot>
    <Axis levels={priceLevels} top={287} bottom={833} badge={{ y: 337, text: '1h13m', tone: 'green' }} />
  </Pane>
);

const MomentumPane = () => (
  <Pane $grow={190}>
    <PaneTitle $width={130}><h2>Momentum (3)</h2><TitleIcons /></PaneTitle>
    <Plot $from="#e1e8ff" $to="#dbe4fe">
      <PlotSvg viewBox="5 836 1855 188" preserveAspectRatio="none">
        <GridLines levels={momentumLevels} top={836} bottom={1024} />
        <path d={momentum.light} fill="none" stroke="#d45c60" />
        <path d={momentum.grey} fill="none" stroke="#807078" />
        <path d={momentum.dark} fill="none" stroke="#000" />
        <path d="M5 889.500H1861" stroke="#e81010" />
        <path d="M5 904.500H1861" stroke="#2a2ad8" />
      </PlotSvg>
    </Plot>
    <Axis levels={momentumLevels} top={835} bottom={1025} ticks={[859.500, 889.500, 918.500, 948.500, 977.500, 1006.500]} badge={{ y: 904, text: '-4', tone: 'red' }} />
  </Pane>
);

/* ---------- report drawings ---------- */

const polar = (r: number, share: number): Pt => {
  const t = share * 2 * Math.PI;
  return [76 + r * Math.sin(t), 76 - r * Math.cos(t)];
};
const ringSlice = (from: number, to: number) => {
  const [ax, ay] = polar(74, from);
  const [bx, by] = polar(74, to);
  const [cx, cy] = polar(53, to);
  const [dx, dy] = polar(53, from);
  const big = to - from > 0.5 ? 1 : 0;
  return `M${ax} ${ay}A74 74 0 ${big} 1 ${bx} ${by}L${cx} ${cy}A53 53 0 ${big} 0 ${dx} ${dy}Z`;
};
const ringTones: Record<string, [string, string, string, string, string]> = {
  green: ['#46d846', '#2fb82f', '#20c010', '#28ea12', '#009a00'],
  red: ['#e04040', '#c62626', '#b83608', '#ca5512', '#b00000'],
  blue: ['#3f92c8', '#2f66c8', '#2f6cd0', '#74b0ff', '#3a74cc'],
  white: ['#ffffff', '#f8f8f8', '#f0f0f0', '#cccccc', '#dddddd'],
};
const Donut = ({ id, share, tones: [first, second], tone, label, value }: { id: string; share: number; tones: [string, string]; tone: string; label: string; value: string }) => (
  <DonutBox>
    <svg width="152" height="152" viewBox="0 0 152 152" aria-hidden="true">
      <defs>
        {[first, second].map((name) => {
          const c = ringTones[name];
          return (
            <radialGradient key={name} id={`${id}-${name}`} gradientUnits="userSpaceOnUse" cx="76" cy="76" r="74">
              <stop offset=".72" stopColor={c[0]} /><stop offset=".855" stopColor={c[1]} /><stop offset=".865" stopColor={c[2]} /><stop offset="1" stopColor={c[3]} />
            </radialGradient>
          );
        })}
        <linearGradient id={`${id}-core`} x2="1" y2="1"><stop stopColor="#eef3f5" /><stop offset="1" stopColor="#ccdde6" /></linearGradient>
      </defs>
      <circle cx="76" cy="76" r="75" fill="#fff" stroke="#8298a6" />
      <path d={ringSlice(share, 1)} fill={`url(#${id}-${second})`} stroke={ringTones[second][4]} strokeWidth=".7" />
      <path d={ringSlice(0, share)} fill={`url(#${id}-${first})`} stroke={ringTones[first][4]} strokeWidth=".7" />
      <circle cx="76" cy="76" r="52.500" fill="#fff" />
      <circle cx="76" cy="76" r="51.500" fill={`url(#${id}-core)`} stroke="#748c9a" />
    </svg>
    <DonutText $tone={tone}>{label}<strong>{value}</strong></DonutText>
  </DonutBox>
);

const greenFill = '#4fdd4f, #35bb35 48%, #1fc80f 52%, #2ce614';
const redFill = '#f25050, #cc3030 48%, #bb3a08 52%, #cb5512';
const blackFill = '#4c4c4c, #222 48%, #1c2a0c 52%, #2c4a0c';

const spark = (pts: Pt[], x0: number): Pt[] => pts.map(([x, y]) => [(x - x0) / 2.208, (y - 104) / 3]);
const Swing = ({ tone, x0, core, before, after, id }: { tone: string; x0: number; core: Pt[]; before: Pt[]; after: Pt[]; id: string }) => {
  const pts = spark(core, x0);
  return (
    <svg width="140" height="84" viewBox="0 0 140 84" aria-hidden="true">
      <defs><linearGradient id={id} x2="0" y2="1"><stop stopColor={tone} stopOpacity=".04" /><stop offset="1" stopColor={tone} stopOpacity=".27" /></linearGradient></defs>
      <path d={`${toPath(pts)}V83H${pts[0][0]}Z`} fill={`url(#${id})`} />
      <path d="M9 .5H139M9 82.500H139M136.500 3V80" stroke="#94a4ac" fill="none" />
      <path d="M136.500 1l2.500 10h-5zM136.500 82l2.500-10h-5z" fill="#94a4ac" />
      <path d={toPath(spark(before, x0)) + toPath(spark(after, x0))} fill="none" stroke="#98a9b2" strokeWidth="1.800" />
      <path d={toPath(pts)} fill="none" stroke={tone} strokeWidth="2.600" />
    </svg>
  );
};

const Clock = () => (
  <svg width="90" height="90" viewBox="0 0 90 90" aria-hidden="true">
    <defs>
      <linearGradient id="dial" x2="0" y2="1"><stop stopColor="#fff" /><stop offset="1" stopColor="#cdd3d6" /></linearGradient>
    </defs>
    <circle cx="45" cy="45" r="41.500" fill="url(#dial)" stroke="#1c84c4" strokeWidth="6" />
    <circle cx="45" cy="45" r="41.500" fill="none" stroke="#3c9cd6" strokeWidth="2.500" />
    {range(12).map((i) => (
      <path key={i} d={i % 3 ? 'M45 11.500v5' : 'M45 9.500v8'} stroke="#7aa6bc" strokeWidth="1.600" transform={`rotate(${i * 30} 45 45)`} />
    ))}
    <path d="M45 45L57 24M45 45L63 56" stroke="#3c3c3c" strokeWidth="3.600" />
    <circle cx="45" cy="45" r="3.800" fill="#fff" stroke="#3c3c3c" strokeWidth="2" />
  </svg>
);

const TradeChart = () => (
  <svg width="84" height="173" viewBox="0 0 84 173" aria-hidden="true">
    <defs>
      <linearGradient id="win"><stop stopColor="#5fe05f" /><stop offset=".48" stopColor="#30b830" /><stop offset=".52" stopColor="#1fc010" /><stop offset="1" stopColor="#30e818" /></linearGradient>
      <linearGradient id="lose"><stop stopColor="#f45050" /><stop offset=".45" stopColor="#c42a2a" /><stop offset=".5" stopColor="#b83408" /><stop offset="1" stopColor="#cc5a14" /></linearGradient>
    </defs>
    <rect x="21.500" y="6.500" width="20" height="5" fill="#9be09b" stroke={GREEN} />
    <rect x="21.500" y="10.500" width="20" height="112" fill="url(#win)" stroke={GREEN} />
    <rect x="42.500" y="122.500" width="20" height="28" fill="url(#lose)" stroke={RED} />
    <rect x="42.500" y="150.500" width="20" height="16" fill="#e0a0a0" stroke={RED} />
    <path d="M4 10.500h12" stroke={GREEN} /><path d="M20 10.500l-4-2.500v5z" fill={GREEN} />
    <path d="M80 150.500H68" stroke={RED} /><path d="M64 150.500l4-2.500v5z" fill={RED} />
  </svg>
);

const ReportWindow = () => (
  <Report>
    <ReportTitle><Candles /><h2>Detailed report - Momentum move BUY H2 - Wall Street (DFB)</h2><SashButtons /></ReportTitle>
    <ReportHead>
      <HeadCell><Bold>Wall Street (DFB)</Bold></HeadCell>
      <HeadCell><Bold>Momentum move BUY H2<br />2 hours</Bold><Modify>Modify ProBacktest</Modify></HeadCell>
      <HeadCell>
        <Dates>
          <dt>Start:</dt><dd>22-Mar-2012 20:00:00</dd><dd className="amount">[5,000 £]</dd>
          <dt>Current:</dt><dd>18-Jul-2016 10:00:00</dd><dd className="amount">[12,201 £]</dd>
        </Dates>
        <IconButton aria-label="Print"><Printer /></IconButton>
      </HeadCell>
    </ReportHead>
    <Tabs role="tablist">
      <Tab role="tab" aria-selected $width={71} $active>Overview</Tab>
      <Tab role="tab" $width={148}>Statistics of closed trades</Tab>
      <Tab role="tab" $width={72}>Orders list</Tab>
      <Tab role="tab" $width={117}>Closed positions list</Tab>
    </Tabs>
    <Sheet>
      <Upper>
        <GainSide>
          <Heading $inset={5}>Gain: <Tone $tone={GREEN}>7,158.50£ (+143.17%)</Tone></Heading>
          <Row $gap={20}>
            <Donut id="win-rate" share={0.2746} tones={['green', 'red']} tone={GREEN} label={'% of winning\ntrades'} value="27.46%" />
            <Legend>
              <Big>Nbr trades: 193</Big>
              <Entry><Swatch $edge={GREEN} $fill={greenFill} /><Big $tone={GREEN}>Winning: 53</Big></Entry>
              <Entry><Swatch $edge="#000" $fill={blackFill} /><Big>Even: 0</Big></Entry>
              <Entry><Swatch $edge={RED} $fill={redFill} /><Big $tone={RED}>Losing: 140</Big></Entry>
            </Legend>
          </Row>
          <Row $gap={20}>
            <Donut id="ratio" share={0.601} tones={['green', 'red']} tone={GREEN} label="Gain/Loss Ratio" value="1.51" />
            <Legend>
              <Entry><Swatch $edge={GREEN} $fill={greenFill} /><Big $tone={GREEN}>Gains only:<br />21,215.00£</Big></Entry>
              <Entry $space={5}><Swatch $edge={RED} $fill={redFill} /><Big $tone={RED}>Losses only:<br />-14,056.50£</Big></Entry>
            </Legend>
          </Row>
        </GainSide>
        <TradeSide>
          <Heading $inset={12}>Avg gain: <Tone $tone={GREEN}>37.09£ / trade</Tone></Heading>
          <Best><Small $tone={GREEN}>Gain of best trade</Small><Big $tone={GREEN}>415.00£</Big></Best>
          <TradeBars>
            <WinLabel><Small $tone={GREEN}>Avg gain of winning trades</Small><Big $tone={GREEN}>400.28£</Big></WinLabel>
            <TradeChart />
            <LossLabel><Small $tone={RED}>Avg loss of losing trades</Small><Big $tone={RED}>-100.40£</Big></LossLabel>
          </TradeBars>
          <Worst><Small $tone={RED}>Loss of worst trade</Small><Big $tone={RED}>-156.50£</Big></Worst>
        </TradeSide>
      </Upper>
      <Band $height={125}>
        <Extremes>
          <Extreme>
            <Swing id="fall" tone="#e83030" x0={94}
              before={[[95, 258], [109, 178], [135, 107]]}
              core={[[135, 107], [149, 185], [165, 162], [178, 222], [192, 187], [205, 222], [220, 298], [235, 276], [246, 240], [262, 220], [275, 173], [290, 257], [302, 277], [317, 351]]}
              after={[[317, 351], [331, 222], [347, 204], [359, 148], [371, 164]]} />
            <div><Big>Max drawdown:</Big><Big $tone={RED}>1,805.20£</Big><Small>Max consecutive losses: 14</Small></div>
          </Extreme>
          <Extreme>
            <Swing id="rise" tone="#2cb42c" x0={832}
              before={[[832, 200], [846, 276], [873, 351]]}
              core={[[873, 351], [887, 273], [902, 297], [916, 236], [930, 271], [941, 240], [958, 160], [972, 183], [984, 220], [1000, 238], [1013, 287], [1028, 204], [1040, 180], [1055, 107]]}
              after={[[1055, 107], [1069, 237], [1084, 255], [1097, 312], [1109, 295]]} />
            <div><Big>Max runup:</Big><Big $tone={GREEN}>7,658.50£</Big><Small>Max consecutive wins: 3</Small></div>
          </Extreme>
        </Extremes>
      </Band>
      <Band $height={194}>
        <Row $gap={85}>
          <Donut id="time" share={0.5252} tones={['blue', 'white']} tone="#000" label="Time in the market" value="52.52%" />
          <Row $gap={20}><Clock /><Big>Avg executed orders:<br />0.29 per day</Big></Row>
        </Row>
      </Band>
    </Sheet>
    <ReportFoot>The statistics above relate to past data. Past performance is not indicative of future results.</ReportFoot>
  </Report>
);

/* ---------- page ---------- */

export default function App() {
  return (
    <>
      <GlobalStyle />
      <Window>
        <TitleBar>
          <Candles /><Caret /><span>DJI</span><Info>i</Info><Change>18,514.2 (-0.12%)</Change><strong>10:46:43</strong><h1>Wall Street (DFB)</h1>
          <SashButtons />
        </TitleBar>
        <Toolbar>
          <Gap $grow={270} />
          <Field $width={77}><NumberBox defaultValue="100000" aria-label="Amount" />
            <Steps><svg width="8" height="14" viewBox="0 0 8 14"><path d="M4 1l3 3H1zM4 13l3-3H1z" /></svg></Steps>
          </Field>
          <Field $width={79}><Choice aria-label="Unit" defaultValue="u"><option value="u">(x) units</option></Choice><Drop><Caret /></Drop></Field>
          <Gap $grow={353} />
          <Field $width={83}><Choice aria-label="Timeframe" defaultValue="2"><option value="2">2 hours</option></Choice><Drop><Caret /></Drop></Field>
          <Gap $grow={353} />
          <Split>
            <SplitButton $width={36} $side="left" aria-label="Indicators"><Indicators /></SplitButton>
            <SplitButton $width={14} $side="right" aria-label="More indicators"><Caret /></SplitButton>
          </Split>
          <Gap $grow={272} />
          <OrderPanel>
            <Handle aria-label="Collapse"><svg width="5" height="9" viewBox="0 0 5 9"><path d="M0 0v9l5-4.500z" /></svg></Handle>
            <Column $left={2} $right={0}><Caption as="span">&nbsp;</Caption><Tool $w={19} $h={19} aria-label="Order settings"><Wrench size={14} /></Tool></Column>
            <Column><Caption htmlFor="qty">Qty</Caption><Qty id="qty" $width={46} defaultValue="1" /></Column>
            <Rule />
            <Column><Caption htmlFor="limit">Limit</Caption><Tool id="limit" $w={28} $h={28}><OrderIcon /></Tool></Column>
            <Rule />
            <Column><Caption htmlFor="stop">Stop</Caption><Tool id="stop" $w={28} $h={28}><OrderIcon stop /></Tool></Column>
            <Rule />
            <Column><Caption htmlFor="sell">Sell MKT</Caption><Deal id="sell" $tone="sell"><small>18,</small><big>512.</big><sup>8</sup></Deal></Column>
            <Column $left={0}><Caption htmlFor="buy">Buy MKT</Caption><Deal id="buy" $tone="buy"><small>18,</small><big>515.</big><sup>6</sup></Deal></Column>
            <Rule />
            <Guards>
              <Guard><Tick type="checkbox" /><span>S</span><Qty $width={30} disabled defaultValue="10" aria-label="Stop distance" /></Guard>
              <Guard><Tick type="checkbox" /><span>L</span><Qty $width={30} disabled defaultValue="10" aria-label="Limit distance" /></Guard>
            </Guards>
          </OrderPanel>
        </Toolbar>
        <PositionBar>Position:  <strong>0</strong><CancelNote /><strong>  /  0</strong><Gears /></PositionBar>
        <Charts>
          <EquityPane />
          <PricePane />
          <MomentumPane />
          <TimeAxis>
            <TimeSvg>
              {months.map(([x, m]) => {
                const at = `${(((x + 0.5 - 4) / 1857) * 100).toFixed(3)}%`;
                return (
                  <g key={x}>
                    <line x1={at} x2={at} y1="0" y2="4" stroke={INK} />
                    <text x={at} y="16" className={/\d/.test(m) ? 'major' : undefined}>{m}</text>
                  </g>
                );
              })}
            </TimeSvg>
          </TimeAxis>
          <ReportWindow />
        </Charts>
        <StatusBar>
          <Icons $gap={8}>
            <IconButton aria-label="Export chart"><ExportChart /></IconButton>
            <IconButton aria-label="Chart style"><LinkCandles /></IconButton>
            <IconButton aria-label="News"><News /></IconButton>
            <IconButton aria-label="Order book"><Book /></IconButton>
            <ScrollButton aria-label="Scroll left"><svg width="5" height="8" viewBox="0 0 5 8"><path d="M5 0v8L0 4z" /></svg></ScrollButton>
          </Icons>
          <Track />
          <ScrollButton aria-label="Scroll right"><svg width="5" height="8" viewBox="0 0 5 8"><path d="M0 0v8l5-4z" /></svg></ScrollButton>
          <Icons $gap={6} $before={6}>
            <IconButton aria-label="Chart settings"><SettingsCandles /></IconButton>
            <Pressed aria-label="Fit"><Lens sign="fit" /></Pressed>
            <IconButton aria-label="Zoom out"><Lens sign="minus" /></IconButton>
            <IconButton aria-label="Zoom in"><Lens sign="plus" /></IconButton>
          </Icons>
        </StatusBar>
      </Window>
    </>
  );
}
